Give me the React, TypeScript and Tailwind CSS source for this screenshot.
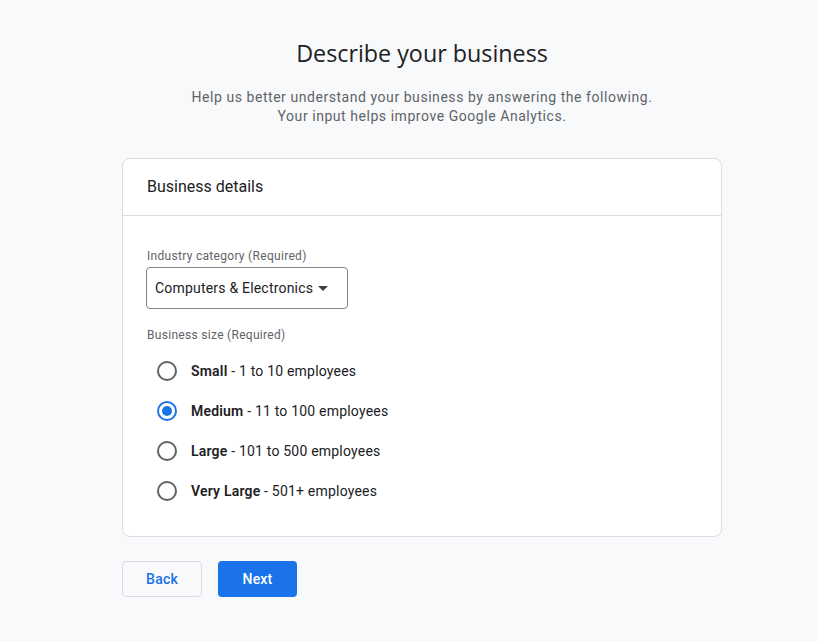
import { useState } from "react";

const sizes = [
  { id: "small", name: "Small", desc: "1 to 10 employees" },
  { id: "medium", name: "Medium", desc: "11 to 100 employees" },
  { id: "large", name: "Large", desc: "101 to 500 employees" },
  { id: "xl", name: "Very Large", desc: "501+ employees" },
];

function Radio({ checked }: { checked: boolean }) {
  return (
    <div className="flex h-10 w-10 items-center justify-center">
      <div
        className={
          checked
            ? "flex h-5 w-5 items-center justify-center rounded-full border-2 border-[#1a73e8]"
            : "h-5 w-5 rounded-full border-2 border-[#5f6368]"
        }
      >
        {checked && <div className="h-2.5 w-2.5 rounded-full bg-[#1a73e8]" />}
      </div>
    </div>
  );
}

export default function App() {
  const [size, setSize] = useState("medium");

  return (
    <div className="min-h-[641px] bg-[#f8f9fa] font-['Roboto',sans-serif] text-[#202124]">
      <div className="ml-[122px] flex w-[600px] flex-col pt-[36px]">
        <h1 className="text-center font-['Open_Sans',sans-serif] text-[23.3px] leading-[34px] text-[#202124]">
          Describe your business
        </h1>
        <p className="mt-[18px] text-center text-[14px] leading-[19px] tracking-[0.55px] text-[#5f6368]">
          Help us better understand your business by answering the following.
          <br />
          Your input helps improve Google Analytics.
        </p>

        {/* Card */}
        <div className="mt-[32px] rounded-lg border border-[#dadce0] bg-white">
          <div className="border-b border-[#dadce0] px-6 pb-[18px] pt-[18px]">
            <h2 className="text-[16px] leading-[20px]">Business details</h2>
          </div>
          <div className="px-6 pb-[25px] pt-[32px]">
            <div className="text-[12px] leading-[16px] tracking-[0.3px] text-[#5f6368]">Industry category (Required)</div>
            <button className="-ml-px mt-[3px] flex h-[42px] items-center gap-[5px] rounded border border-[#80868b] pl-2 pr-[19px] text-[14px] tracking-[0.2px] text-[#202124]">
              Computers &amp; Electronics
              <svg width="10" height="5" viewBox="0 0 10 5" className="mt-[1px]">
                <path d="M0 0l5 5 5-5z" fill="#3c4043" />
              </svg>
            </button>

            <div className="mt-[18px] text-[12px] leading-[16px] tracking-[0.3px] text-[#5f6368]">Business size (Required)</div>
            <div className="mt-[8px] flex flex-col">
              {sizes.map((s) => (
                <label
                  key={s.id}
                  className="flex h-10 cursor-pointer items-center gap-1 text-[14px] tracking-[0.2px]"
                  onClick={() => setSize(s.id)}
                >
                  <Radio checked={size === s.id} />
                  <span>
                    <span className="font-semibold">{s.name}</span> - {s.desc}
                  </span>
                </label>
              ))}
            </div>
          </div>
        </div>

        <div className="mt-[24px] flex gap-4">
          <button className="h-9 w-20 rounded border border-[#dadce0] text-[14px] font-medium tracking-[0.2px] text-[#1a73e8]">
            Back
          </button>
          <button className="h-9 w-[79px] rounded bg-[#1a73e8] text-[14px] font-medium tracking-[0.2px] text-white">
            Next
          </button>
        </div>
      </div>
    </div>
  );
}
